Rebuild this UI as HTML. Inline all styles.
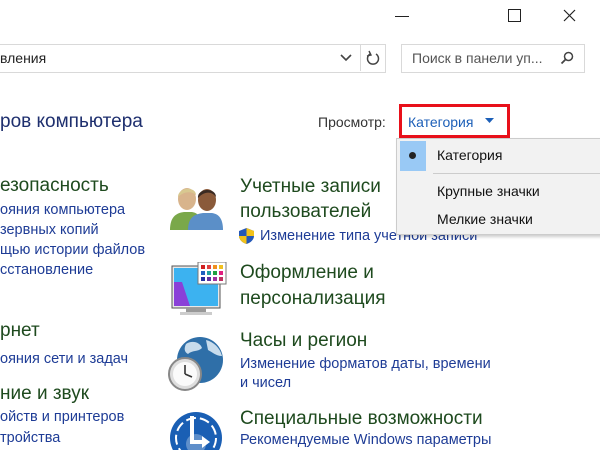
<!DOCTYPE html>
<html><head><meta charset="utf-8"><style>
body{margin:0;width:600px;height:450px;overflow:hidden;background:#fff;font-family:"Liberation Sans",sans-serif;position:relative}
.a{position:absolute;white-space:nowrap}
.h{position:absolute;white-space:nowrap;color:#1e4a1e;font-size:19px;line-height:22px}
.l{position:absolute;white-space:nowrap;color:#1e3c96;font-size:14.5px;line-height:18px}
.m{position:absolute;white-space:nowrap;color:#111;font-size:14px;line-height:18px;z-index:6}
</style></head><body>
<div class="a" style="left:395px;top:16px;width:14px;height:1px;background:#222"></div>
<div class="a" style="left:508px;top:9px;width:11px;height:11px;border:1px solid #222"></div>
<svg class="a" style="left:563px;top:9px" width="13" height="13"><path d="M1 1L12 12M12 1L1 12" stroke="#222" stroke-width="1.2"/></svg>

<div class="a" style="left:-2px;top:44px;width:386px;height:27px;border:1px solid #d9d9d9"></div>
<div class="a" style="left:0;top:49px;font-size:14px;color:#222;line-height:18px">вления</div>
<svg class="a" style="left:340px;top:54px" width="12" height="8"><path d="M1 1L6 6L11 1" stroke="#444" stroke-width="1.6" fill="none"/></svg>
<div class="a" style="left:360px;top:45px;width:1px;height:26px;background:#d9d9d9"></div>
<svg class="a" style="left:366px;top:50px" width="14" height="16"><path d="M4 4A5.5 5.5 0 1 0 10 4" stroke="#444" stroke-width="1.5" fill="none"/><path d="M3 1L5 5L1 6" stroke="#444" stroke-width="1.4" fill="none"/></svg>

<div class="a" style="left:401px;top:44px;width:182px;height:27px;border:1px solid #d9d9d9"></div>
<div class="a" style="left:412px;top:49px;font-size:14px;color:#555;line-height:18px">Поиск в панели уп...</div>
<svg class="a" style="left:560px;top:51px" width="14" height="14"><circle cx="8.5" cy="5.5" r="4" stroke="#444" stroke-width="1.5" fill="none"/><path d="M5.5 8.5L1.5 12.5" stroke="#444" stroke-width="1.8"/></svg>

<div class="a" style="left:0;top:110px;font-size:19px;color:#1e2f6e;line-height:24px">ров компьютера</div>
<div class="a" style="left:318px;top:113px;font-size:14px;color:#333;line-height:18px">Просмотр:</div>
<div class="a" style="left:399px;top:104px;width:105px;height:28px;border:3px solid #e8101a"></div>
<div class="a" style="left:408px;top:113px;font-size:14px;color:#1c5fb8;line-height:18px">Категория</div>
<svg class="a" style="left:485px;top:118px" width="10" height="6"><path d="M0 0H9L4.5 5Z" fill="#1c5fb8"/></svg>

<div class="h" style="left:0;top:175px">езопасность</div>
<div class="l" style="left:0;top:201px">ояния компьютера</div>
<div class="l" style="left:0;top:221px">зервных копий</div>
<div class="l" style="left:0;top:241px">щью истории файлов</div>
<div class="l" style="left:0;top:261px">сстановление</div>
<div class="h" style="left:0;top:320px">рнет</div>
<div class="l" style="left:0;top:350px">ояния сети и задач</div>
<div class="h" style="left:0;top:383px">ние и звук</div>
<div class="l" style="left:0;top:408px">ойств и принтеров</div>
<div class="l" style="left:0;top:429px">тройства</div>

<svg class="a" style="left:168px;top:183px" width="56" height="48">
<path d="M2 47C2 34 8 30 16 29H24C30 30 34 34 34 47Z" fill="#7aa84a"/>
<ellipse cx="19" cy="16" rx="9" ry="11" fill="#d8b48c"/>
<path d="M10 14C10 4 28 3 28 12C24 8 16 8 10 14Z" fill="#d8c890"/>
<path d="M20 47C20 34 27 31 35 30H44C51 31 55 36 55 47Z" fill="#5b8fc8"/>
<ellipse cx="39" cy="17" rx="9" ry="11" fill="#8a5a3a"/>
<path d="M30 15C29 5 48 4 48 14C44 8 36 8 30 15Z" fill="#3a2a22"/>
</svg>
<div class="h" style="left:240px;top:176px">Учетные записи</div>
<div class="h" style="left:240px;top:201px">пользователей</div>
<svg class="a" style="left:238px;top:227px" width="17" height="18"><path d="M8.5 1L16 4V9C16 13 12 16 8.5 17C5 16 1 13 1 9V4Z" fill="#2458b8"/><path d="M8.5 1V9H16V4Z" fill="#f2c21a"/><path d="M1 9H8.5V17C5 16 1 13 1 9Z" fill="#f2c21a"/></svg>
<div class="l" style="left:260px;top:227px">Изменение типа учетной записи</div>

<svg class="a" style="left:168px;top:262px" width="60" height="60">
<rect x="4" y="4" width="48" height="42" fill="#e8e8e8" stroke="#555" stroke-width="1"/>
<rect x="6" y="6" width="44" height="38" fill="#3cb2f0"/>
<path d="M6 20H14L22 44H6Z" fill="#8a40d8"/>
<rect x="18" y="46" width="20" height="4" fill="#999"/>
<rect x="12" y="50" width="32" height="3" fill="#ccc"/>
<rect x="30" y="0" width="28" height="22" fill="#fff" stroke="#777"/>
<rect x="33" y="3" width="4" height="4" fill="#d02020"/><rect x="39" y="3" width="4" height="4" fill="#e04040"/><rect x="45" y="3" width="4" height="4" fill="#f09020"/><rect x="51" y="3" width="4" height="4" fill="#f0c020"/>
<rect x="33" y="9" width="4" height="4" fill="#2060c0"/><rect x="39" y="9" width="4" height="4" fill="#20a0a0"/><rect x="45" y="9" width="4" height="4" fill="#20a040"/><rect x="51" y="9" width="4" height="4" fill="#e02080"/>
<rect x="33" y="15" width="4" height="4" fill="#2030a0"/><rect x="39" y="15" width="4" height="4" fill="#6030a0"/><rect x="45" y="15" width="4" height="4" fill="#a030a0"/><rect x="51" y="15" width="4" height="4" fill="#c03060"/>
</svg>
<div class="h" style="left:240px;top:262px">Оформление и</div>
<div class="h" style="left:240px;top:288px">персонализация</div>

<svg class="a" style="left:166px;top:334px" width="60" height="60">
<circle cx="34" cy="26" r="23" fill="#2f6fa8"/>
<path d="M20 10C26 6 34 8 36 14C32 18 26 16 22 20C18 18 18 14 20 10Z M40 6C48 8 54 14 56 22C50 22 46 18 42 16Z" fill="#c8dcec"/>
<circle cx="19" cy="40" r="16" fill="#ddd" stroke="#888" stroke-width="2"/>
<circle cx="19" cy="40" r="12" fill="#fafafa"/>
<path d="M19 40V31M19 40L26 43" stroke="#333" stroke-width="1.6"/>
</svg>
<div class="h" style="left:240px;top:330px">Часы и регион</div>
<div class="l" style="left:240px;top:355px">Изменение форматов даты, времени</div>
<div class="l" style="left:240px;top:374px">и чисел</div>

<svg class="a" style="left:168px;top:410px" width="56" height="40">
<circle cx="28" cy="28" r="26" fill="#1a5fb4"/>
<circle cx="28" cy="28" r="20" fill="none" stroke="#fff" stroke-width="2" stroke-dasharray="10 4"/>
<circle cx="28" cy="34" r="10" fill="#fff" opacity=".3"/>
<path d="M24 6V32H36" stroke="#fff" stroke-width="4" fill="none"/>
<path d="M34 26L42 32L34 38Z" fill="#fff"/>
</svg>
<div class="h" style="left:240px;top:408px">Специальные возможности</div>
<div class="l" style="left:240px;top:431px">Рекомендуемые Windows параметры</div>

<div class="a" style="left:396px;top:138px;width:204px;height:95px;background:#f2f2f2;border:1px solid #ccc;box-shadow:2px 2px 3px rgba(0,0,0,.2);z-index:5"></div>
<div class="a" style="left:400px;top:141px;width:26px;height:30px;background:#99c9f5;z-index:6"></div>
<div class="a" style="left:409px;top:152px;width:7px;height:7px;border-radius:50%;background:#222;z-index:6"></div>
<div class="m" style="left:437px;top:146px">Категория</div>
<div class="a" style="left:433px;top:173px;width:167px;height:1px;background:#ccc;z-index:6"></div>
<div class="m" style="left:437px;top:182px">Крупные значки</div>
<div class="m" style="left:437px;top:210px">Мелкие значки</div>
</body></html>
